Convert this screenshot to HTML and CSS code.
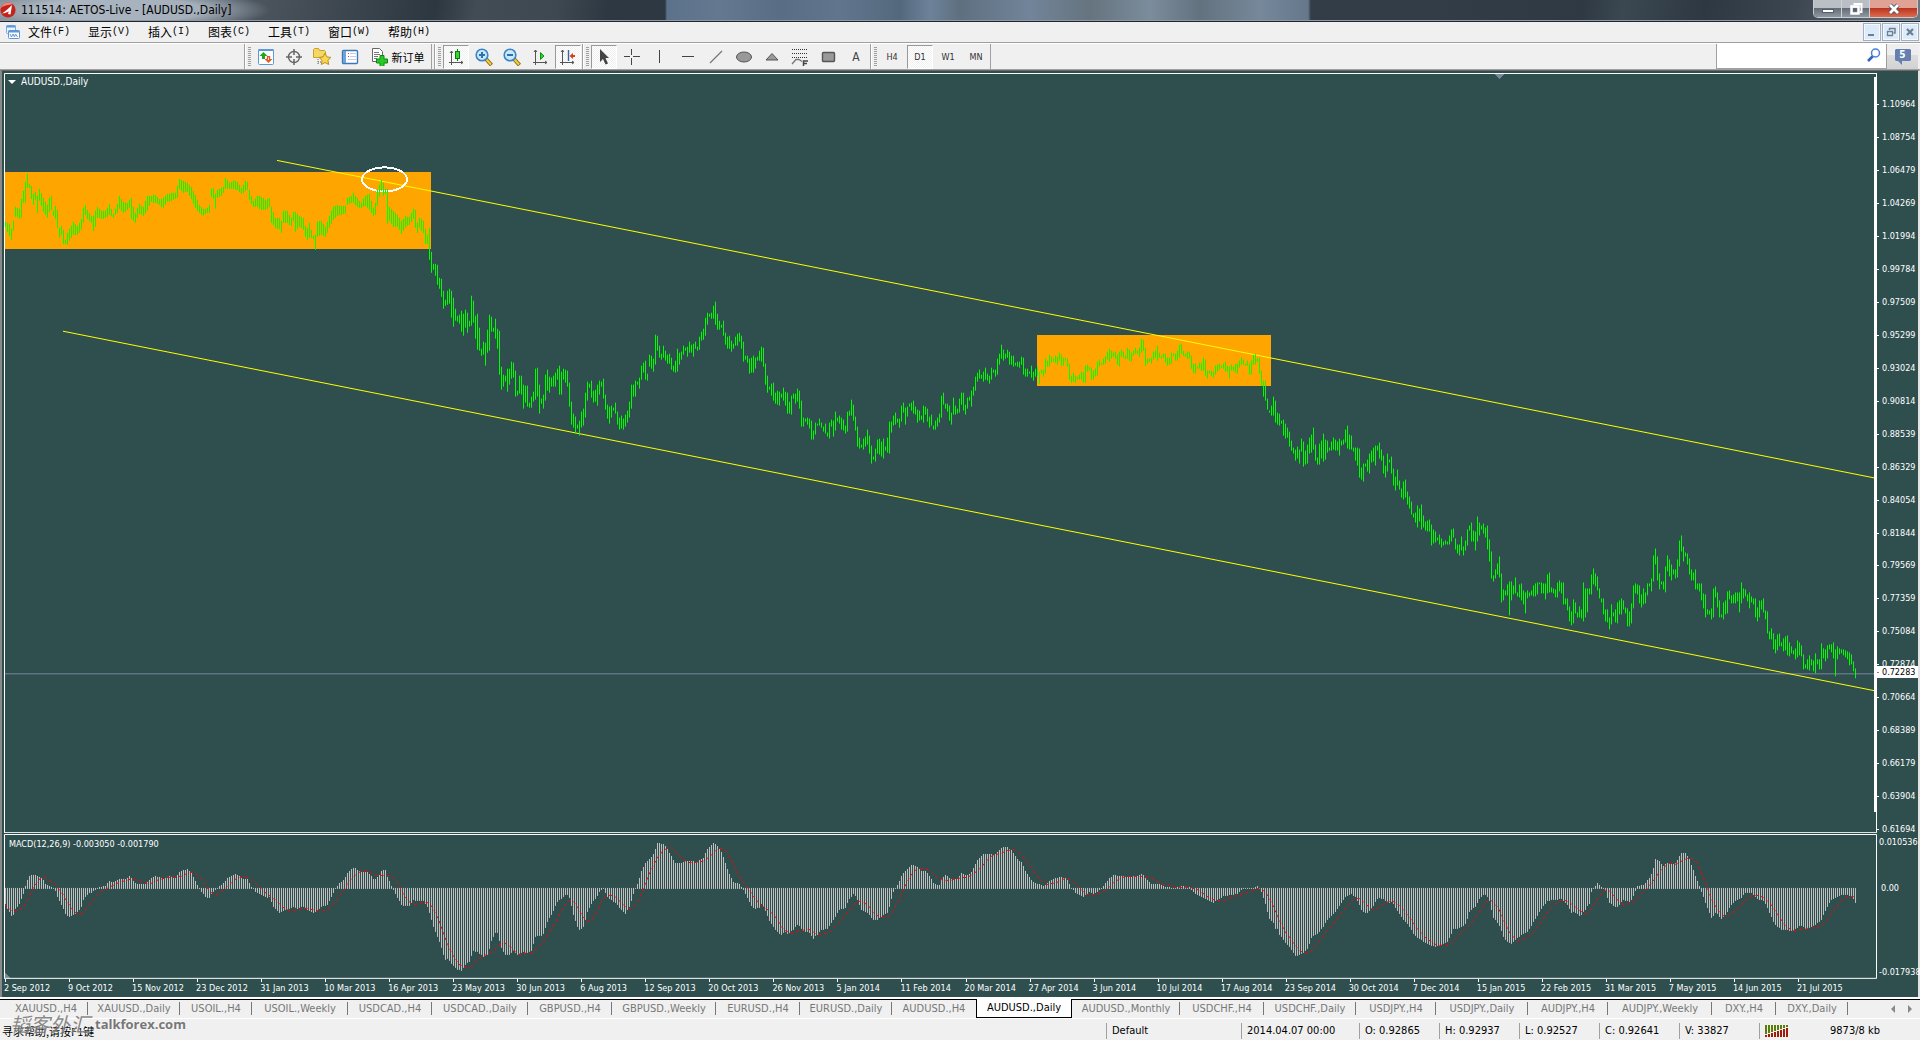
FILE: index.html
```html
<!DOCTYPE html>
<html lang="zh-CN">
<head>
<meta charset="utf-8">
<title>111514: AETOS-Live - [AUDUSD.,Daily]</title>
<link rel="stylesheet" href="styles.css">
</head>
<body>
<header class="titlebar">
  <svg class="app-icon" viewBox="0 0 16 16" width="16" height="16"><circle cx="8" cy="8" r="7.6" fill="#c5221c"/><path d="M1 6A7.6 7.6 0 0 1 13 2C9 3 4 3 1 6z" fill="#e88a80"/><path d="M2 11.500Q6 9 12 3l-1.500 9.500-2.500-.5.8-2.500L5 11z" fill="#fff"/></svg>
  <h1 class="title">111514: AETOS-Live - [AUDUSD.,Daily]</h1>
  <div class="win-controls">
    <button class="win-btn win-min" aria-label="Minimize"><svg viewBox="0 0 14 12" width="14" height="12"><rect x="1.500" y="6.500" width="11" height="3" fill="#fff" stroke="#555f6b"/></svg></button>
    <button class="win-btn win-max" aria-label="Restore"><svg viewBox="0 0 14 12" width="14" height="12"><path d="M4.500 1h8v8h-2" fill="none" stroke="#fff" stroke-width="2"/><rect x="2.500" y="3.500" width="7" height="7" fill="none" stroke="#fff" stroke-width="2.500"/><rect x="4.500" y="5.500" width="3" height="3" fill="#555f6b"/></svg></button>
    <button class="win-btn win-close" aria-label="Close"><svg viewBox="0 0 14 12" width="14" height="12"><path d="M3 2l8 8M11 2l-8 8" stroke="#4b5060" stroke-width="4.500"/><path d="M3 2l8 8M11 2l-8 8" stroke="#fff" stroke-width="2.800"/></svg></button>
  </div>
</header>

<nav class="menubar">
  <svg class="mdi-icon" viewBox="0 0 15 15" width="15" height="15"><rect x="1.500" y=".5" width="9" height="8" rx="1" fill="#eaf3fc" stroke="#7cacdf"/><path d="M1.500 1.500h9" stroke="#5d97d4" stroke-width="2"/><rect x="3.500" y="5.500" width="11" height="8" rx="1" fill="#fff" stroke="#5d97d4"/><path d="M3.500 6.500h11" stroke="#5d97d4" stroke-width="2"/><path d="M5 9l1.500 3L8 9l1.500 3 1-3 2 3" fill="none" stroke="#5d97d4"/></svg>
  <button class="menu">文件<span class="key">(F)</span></button>
  <button class="menu">显示<span class="key">(V)</span></button>
  <button class="menu">插入<span class="key">(I)</span></button>
  <button class="menu">图表<span class="key">(C)</span></button>
  <button class="menu">工具<span class="key">(T)</span></button>
  <button class="menu">窗口<span class="key">(W)</span></button>
  <button class="menu">帮助<span class="key">(H)</span></button>
  <div class="mdi-controls">
    <button class="mdi-btn" aria-label="Minimize chart"><svg viewBox="0 0 12 12" width="12" height="12"><path d="M2 9h6" stroke="#6d7f90" stroke-width="2"/></svg></button>
    <button class="mdi-btn" aria-label="Restore chart"><svg viewBox="0 0 12 12" width="12" height="12"><path d="M4 2.500h6.500M10 2v5H8.500M4.500 2v2" fill="none" stroke="#6d7f90" stroke-width="1.500"/><path d="M2.500 5v4.500h5V5M2 5.500h6" fill="none" stroke="#6d7f90" stroke-width="1.300"/></svg></button>
    <button class="mdi-btn" aria-label="Close chart"><svg viewBox="0 0 12 12" width="12" height="12"><path d="M3 3l6 6M9 3l-6 6" stroke="#6d7f90" stroke-width="2.300"/></svg></button>
  </div>
</nav>

<div class="toolbar">
  <div class="group group-first">
    <span class="grip"></span>
    <button class="tool" aria-label="Market watch"><svg viewBox="0 0 18 18" width="18" height="18"><rect x="1.500" y="1.500" width="15" height="15" rx="1" fill="#fff" stroke="#5b9bd5"/><path d="M1.500 2h15" stroke="#5b9bd5" stroke-width="2"/><path d="M6.500 4l4 4H8v3H5V8H2.500z" fill="#1fa51f"/><path d="M11.500 15l-4-4h2.300V8h3.400v3h2.300z" fill="#e4572a"/><path d="M11.500 9.500v2.500" stroke="#ffe0cc"/></svg></button>
    <button class="tool" aria-label="Data window"><svg viewBox="0 0 18 18" width="18" height="18"><circle cx="9" cy="9" r="5.500" fill="none" stroke="#666" stroke-width="1.400"/><path d="M9 1v6M9 11v6M1 9h6M11 9h6" stroke="#666" stroke-width="1.500"/></svg></button>
    <button class="tool" aria-label="Navigator"><svg viewBox="0 0 18 18" width="18" height="18"><path d="M.5 9.500v-8l1-1h4l1 2h5l1 1v6z" fill="#f5d765" stroke="#c9a227"/><path d="M5 11v6M5 14h4" stroke="#666" stroke-dasharray="1 1"/><path d="M12 5l1.900 3.900 4 .5-3 2.900.8 4.200-3.700-2-3.700 2 .8-4.200-3-2.900 4-.5z" fill="#fbd64f" stroke="#b98f1c"/></svg></button>
    <button class="tool" aria-label="Terminal"><svg viewBox="0 0 18 18" width="18" height="18"><rect x="1.500" y="2.500" width="15" height="13" rx="1" fill="#fff" stroke="#3f78b8" stroke-width="1.400"/><path d="M2 3h3v12H2z" fill="#6fa4da"/><path d="M7 5.500h1M7 8.500h1" stroke="#d33"/><path d="M9 5.500h6M9 8.500h6M7 11.500h8" stroke="#c3cce4"/></svg></button>
    <button class="tool tool-order"><svg viewBox="0 0 18 18" width="18" height="18"><path d="M2.500.5h7l3 3v10h-10z" fill="#fff" stroke="#666"/><path d="M4 4.500h5M4 6.500h6M4 8.500h4M4 10.500h3" stroke="#777"/><path d="M10 7.500h4v3.500h3.500v4H14v3.500h-4V15H6.500v-4H10z" fill="#26c926" stroke="#0e860e"/></svg><span>新订单</span></button>
  </div>
  <div class="group group-charts">
    <span class="grip"></span>
    <button class="tool pressed" aria-label="Candlesticks"><svg viewBox="0 0 18 18" width="18" height="18"><path d="M4.500 3v14M2 14.500h14M3 5l1.500-2L6 5M14 13l2 1.500-2 1.500" fill="none" stroke="#555"/><path d="M10.500 1v12" stroke="#0b7a0b"/><rect x="8.500" y="3.500" width="4" height="7" fill="#35d435" stroke="#0b7a0b"/></svg></button>
    <button class="tool" aria-label="Zoom in"><svg viewBox="0 0 18 18" width="18" height="18"><path d="M11 11l5.500 6" stroke="#8c6a0c" stroke-width="4"/><path d="M11 11l5 5.500" stroke="#f4cf3c" stroke-width="2"/><circle cx="7" cy="7" r="5.800" fill="#c9e8fb" stroke="#3a84c6" stroke-width="1.600"/><path d="M7 4v6M4 7h6" stroke="#2e70ad" stroke-width="2"/></svg></button>
    <button class="tool" aria-label="Zoom out"><svg viewBox="0 0 18 18" width="18" height="18"><path d="M11 11l5.500 6" stroke="#8c6a0c" stroke-width="4"/><path d="M11 11l5 5.500" stroke="#f4cf3c" stroke-width="2"/><circle cx="7" cy="7" r="5.800" fill="#c9e8fb" stroke="#3a84c6" stroke-width="1.600"/><path d="M4 7h6" stroke="#2e70ad" stroke-width="2"/></svg></button>
    <button class="tool" aria-label="Auto scroll"><svg viewBox="0 0 18 18" width="18" height="18"><path d="M4.500 2v15M2 14.500h14M3 4l1.500-2L6 4M14 13l2 1.500-2 1.500" fill="none" stroke="#555"/><path d="M9.500 4.500v7L13 8z" fill="#35d435" stroke="#119111"/></svg></button>
    <button class="tool pressed" aria-label="Chart shift"><svg viewBox="0 0 18 18" width="18" height="18"><path d="M3.500 2v15M1 14.500h14M2 4l1.500-2L5 4M13 13l2 1.500-2 1.500" fill="none" stroke="#555"/><path d="M9.500 2v11" stroke="#2c6aa6" stroke-width="1.400"/><path d="M10.500 8l3.500-3v2h2v2h-2v2z" fill="#d8401a"/></svg></button>
  </div>
  <div class="group">
    <span class="grip"></span>
    <button class="tool pressed" aria-label="Cursor"><svg viewBox="0 0 18 18" width="18" height="18"><path d="M5 1v13l3-3 2.500 5.500 2.500-1L10.500 10H14z" fill="#444"/></svg></button>
    <button class="tool" aria-label="Crosshair"><svg viewBox="0 0 18 18" width="18" height="18"><path d="M8.500 1v6M8.500 10v7M1 8.500h6M10 8.500h7" stroke="#444"/></svg></button>
    <button class="tool" aria-label="Vertical line"><svg viewBox="0 0 18 18" width="18" height="18"><path d="M8.500 2v13" stroke="#444"/></svg></button>
    <button class="tool" aria-label="Horizontal line"><svg viewBox="0 0 18 18" width="18" height="18"><path d="M3 8.500h12" stroke="#444"/></svg></button>
    <button class="tool" aria-label="Trendline"><svg viewBox="0 0 18 18" width="18" height="18"><path d="M3 15L15 3" stroke="#777" stroke-width="1.300"/></svg></button>
    <button class="tool" aria-label="Ellipse"><svg viewBox="0 0 18 18" width="18" height="18"><ellipse cx="9" cy="9" rx="7.500" ry="5" fill="#999" stroke="#555"/></svg></button>
    <button class="tool" aria-label="Triangle"><svg viewBox="0 0 18 18" width="18" height="18"><path d="M9 5.500l6 6.500H3z" fill="#999" stroke="#555"/></svg></button>
    <button class="tool" aria-label="Fibonacci"><svg viewBox="0 0 18 18" width="18" height="18"><path d="M1 1.500h16M1 5.500h16M1 9.500h16" stroke="#333" stroke-dasharray="1 1"/><path d="M1 16l4-4.500h3l3 2" fill="none" stroke="#777" stroke-width="1.300"/><path d="M12.500 18v-5H17M12.500 15.500H16" fill="none" stroke="#444" stroke-width="1.500"/></svg></button>
    <button class="tool" aria-label="Rectangle"><svg viewBox="0 0 18 18" width="18" height="18"><rect x="3.500" y="4.500" width="12" height="9" rx="1" fill="#999" stroke="#555" stroke-width="1.400"/></svg></button>
    <button class="tool letter">A</button>
  </div>
  <div class="group group-last">
    <span class="grip"></span>
    <button class="tool period">H4</button>
    <button class="tool period pressed">D1</button>
    <button class="tool period">W1</button>
    <button class="tool period">MN</button>
  </div>
  <div class="search">
    <input type="text" aria-label="Search">
    <svg viewBox="0 0 14 14" width="14" height="14"><path d="M6 8l-5 5" stroke="#2f62c4" stroke-width="2.600"/><circle cx="8.500" cy="5" r="4" fill="#fff" stroke="#4a7fdc" stroke-width="1.500"/></svg>
  </div>
  <button class="chat" aria-label="Messages"><svg viewBox="0 0 16 16" width="16" height="16"><path d="M1 0h14l1 1v10l-1 1H7v4l-4-4H1l-1-1V1z" fill="#6580b0"/></svg><span>5</span></button>
</div>

<main class="chart">
  <section class="pane price-pane">
    <svg class="plot" viewBox="4 73 1873 761" preserveAspectRatio="none" shape-rendering="crispEdges">
      <rect x="4" y="172" width="427" height="77" fill="#ffa500"/>
      <rect x="1037" y="335" width="234" height="51" fill="#ffa500"/>
      <path d="M5 674.500H1875" stroke="#778899"/>
      <path d="M277 160.500L1875 478.500M63 331.500L1875 691.500" stroke="#ff0" fill="none"/>
      <ellipse cx="384.500" cy="179.500" rx="22.500" ry="12" fill="none" stroke="#fff" stroke-width="2"/>
      <path id="bars" stroke="#0f0" fill="none"/>
      <path d="M4.500 833.500V73.500H1876.500M4 833.500H1877M1876.500 73v760" stroke="#fff" fill="none"/>
      <path d="M1875.500 77v736" stroke="#fff" stroke-width="3"/>
      <path d="M1495 74h9l-4.500 5z" fill="#778899"/>
    </svg>
    <p class="caption symbol"><span class="caret"></span>AUDUSD.,Daily</p>
  </section>
  <ol class="price-axis">
    <li>1.10964</li><li>1.08754</li><li>1.06479</li><li>1.04269</li><li>1.01994</li><li>0.99784</li><li>0.97509</li><li>0.95299</li><li>0.93024</li><li>0.90814</li><li>0.88539</li><li>0.86329</li><li>0.84054</li><li>0.81844</li><li>0.79569</li><li>0.77359</li><li>0.75084</li><li>0.72874</li><li>0.70664</li><li>0.68389</li><li>0.66179</li><li>0.63904</li><li>0.61694</li>
    <li class="current">0.72283</li>
  </ol>
  <section class="pane macd-pane">
    <svg class="plot" viewBox="4 835 1873 145" preserveAspectRatio="none" shape-rendering="crispEdges">
      <path id="histogram" stroke="#c0c0c0" fill="none"/>
      <path id="signal" stroke="#f00" fill="none" stroke-dasharray="3 3"/>
      <path d="M5 974v5h5z" fill="#778899"/>
      <path d="M4.500 979V835.500H1876.500V979.500H4" stroke="#fff" fill="none"/>
    </svg>
    <p class="caption">MACD(12,26,9) -0.003050 -0.001790</p>
  </section>
  <ol class="macd-axis"><li>0.010536</li><li class="zero">0.00</li><li>-0.017938</li></ol>
  <ol class="dates">
    <li>2 Sep 2012</li><li>9 Oct 2012</li><li>15 Nov 2012</li><li>23 Dec 2012</li><li>31 Jan 2013</li><li>10 Mar 2013</li><li>16 Apr 2013</li><li>23 May 2013</li><li>30 Jun 2013</li><li>6 Aug 2013</li><li>12 Sep 2013</li><li>20 Oct 2013</li><li>26 Nov 2013</li><li>5 Jan 2014</li><li>11 Feb 2014</li><li>20 Mar 2014</li><li>27 Apr 2014</li><li>3 Jun 2014</li><li>10 Jul 2014</li><li>17 Aug 2014</li><li>23 Sep 2014</li><li>30 Oct 2014</li><li>7 Dec 2014</li><li>15 Jan 2015</li><li>22 Feb 2015</li><li>31 Mar 2015</li><li>7 May 2015</li><li>14 Jun 2015</li><li>21 Jul 2015</li>
  </ol>
</main>

<nav class="tabs">
  <button class="tab w84">XAUUSD.,H4</button>
  <button class="tab w92">XAUUSD.,Daily</button>
  <button class="tab w72">USOIL.,H4</button>
  <button class="tab w96">USOIL.,Weekly</button>
  <button class="tab w84">USDCAD.,H4</button>
  <button class="tab w96">USDCAD.,Daily</button>
  <button class="tab w84">GBPUSD.,H4</button>
  <button class="tab w104">GBPUSD.,Weekly</button>
  <button class="tab w84">EURUSD.,H4</button>
  <button class="tab w92">EURUSD.,Daily</button>
  <button class="tab w84 before-active">AUDUSD.,H4</button>
  <button class="tab w96 active">AUDUSD.,Daily</button>
  <button class="tab w108">AUDUSD.,Monthly</button>
  <button class="tab w84">USDCHF.,H4</button>
  <button class="tab w92">USDCHF.,Daily</button>
  <button class="tab w80">USDJPY.,H4</button>
  <button class="tab w92">USDJPY.,Daily</button>
  <button class="tab w80">AUDJPY.,H4</button>
  <button class="tab w104">AUDJPY.,Weekly</button>
  <button class="tab w64">DXY.,H4</button>
  <button class="tab w72">DXY.,Daily</button>
  <div class="tab-scroll">
    <button aria-label="Scroll left"><svg viewBox="0 0 4 8" width="4" height="8"><path d="M4 0v8L0 4z" fill="#888"/></svg></button>
    <button aria-label="Scroll right"><svg viewBox="0 0 4 8" width="4" height="8"><path d="M0 0v8l4-4z" fill="#888"/></svg></button>
  </div>
</nav>

<footer class="status">
  <span class="hint">寻求帮助,请按F1键</span>
  <span class="cell profile">Default</span>
  <span class="cell time">2014.04.07 00:00</span>
  <span class="cell">O: 0.92865</span>
  <span class="cell">H: 0.92937</span>
  <span class="cell">L: 0.92527</span>
  <span class="cell">C: 0.92641</span>
  <span class="cell">V: 33827</span>
  <span class="cell traffic">
    <svg viewBox="0 0 23 12" width="23" height="12" shape-rendering="crispEdges"><path d="M1 0v9M4 0v8M7 0v7M10 0v6M13 0v5M16 0v4M19 0v3M22 0v2" stroke="#5a7d0a" stroke-width="2"/><path d="M1 10v2M4 9v3M7 8v4M10 7v5M13 6v6M16 5v7M19 4v8M22 3v9" stroke="#a01c0a" stroke-width="2"/></svg>
    <span>9873/8 kb</span>
  </span>
  <div class="watermark"><span class="brand">韬客外汇</span><span>talkforex.com</span></div>
</footer>
<script src="chart.js"></script>
</body>
</html>
```

FILE: styles.css
```css
* { box-sizing: border-box; }
html, body { height: 100%; }
body {
  margin: 0;
  display: flex;
  flex-direction: column;
  overflow: hidden;
  background: #f0f0f0;
  color: #000;
  font-family: "DejaVu Sans Condensed", "DejaVu Sans", "Noto Sans CJK SC", sans-serif;
  font-size: 11px;
}
button {
  margin: 0;
  padding: 0;
  border: 0;
  background: none;
  color: inherit;
  font: inherit;
}
ol { margin: 0; padding: 0; list-style: none; }
p, h1 { margin: 0; font-weight: normal; }
svg { display: block; flex: none; }

/* Window title */
.titlebar {
  flex: none;
  display: flex;
  align-items: flex-start;
  height: 22px;
  border-bottom: 1px solid #1f262e;
  box-shadow: inset 0 -1px #8f9aa5;
  background:
    radial-gradient(ellipse 150px 22px at 120px 10px, rgba(190, 202, 214, .75) 55%, transparent 100%),
    linear-gradient(90deg, transparent 665px, #5c728a 667px, #647990 720px, #596e85 780px, #61768d 840px, #54687d 900px, #6d8299 930px, #5e7080 960px, #728499 1030px, #66747f 1090px, #7b8c9c 1150px, #63727f 1200px, #76889a 1260px, #65788c 1308px, transparent 1311px),
    linear-gradient(100deg, #7d8790 0, #4b545d 260px, #2d3740 430px, #424c55 470px, #3e4851 550px, #2d3842 600px, #323d47 1400px, #2e3944 1560px, #3b4751 1600px, #2d3843 1680px, #3c4650 1770px, #6d7882 100%);
}
.app-icon { margin: 2px 5px 0 0; }
.title { flex: 1; font: 12px/21px "DejaVu Sans Condensed", "DejaVu Sans", sans-serif; }
.win-controls {
  display: flex;
  height: 18px;
  margin-right: 2px;
  border: 1px solid #c7ccd1;
  border-top: 0;
  border-radius: 0 0 5px 5px;
  overflow: hidden;
}
.win-btn {
  display: flex;
  justify-content: center;
  align-items: center;
  width: 28px;
  height: 17px;
  border-right: 1px solid #d0d4d8;
  background: linear-gradient(#b9bfc5 0 8px, #626b75 8px, #8f979f);
}
.win-close { width: 47px; border: 0; background: linear-gradient(#dfa294 0 8px, #b8341b 8px, #dd6b50); }

/* Menu */
.menubar {
  flex: none;
  display: flex;
  align-items: center;
  gap: 18px;
  height: 21px;
  padding: 0 1px 0 5px;
  border-bottom: 1px solid #a0a0a0;
  font: 12px/18px "Noto Sans CJK SC", sans-serif;
}
.mdi-icon { margin-right: -10px; }
.menu { display: flex; width: 42px; white-space: nowrap; }
.key { font: 10px/18px "Liberation Mono", monospace; }
.mdi-controls { display: flex; gap: 1px; margin-left: auto; }
.mdi-btn {
  display: flex;
  justify-content: center;
  align-items: center;
  width: 18px;
  height: 18px;
  border: 1px solid #9fb0c2;
  background: #dcebfa;
  box-shadow: inset 0 0 0 1px #f4f9fe;
}

/* Toolbar */
.toolbar {
  flex: none;
  display: flex;
  height: 27px;
  border-top: 1px solid #fff;
  border-bottom: 1px solid #a0a0a0;
}
.group {
  display: flex;
  align-items: center;
  padding-left: 3px;
  border-left: 1px solid #a0a0a0;
  box-shadow: inset 1px 0 #fff;
}
.group-first { margin-left: 244px; padding-right: 1px; border-right: 1px solid #a0a0a0; }
.group-charts { margin-left: 2px; }
.group-last { border-right: 1px solid #a0a0a0; }
.grip {
  width: 3px;
  height: 20px;
  margin-right: 1px;
  background: repeating-linear-gradient(#a0a0a0 0 1px, transparent 1px 2px);
}
.tool {
  display: flex;
  justify-content: center;
  align-items: center;
  width: 26px;
  height: 24px;
  margin: 0 1px;
  color: #444;
}
.pressed {
  border: 1px solid #fff;
  border-top-color: #999;
  border-left-color: #999;
  background: repeating-conic-gradient(#fff 0 25%, #f0f0f0 0 50%) 0 0 / 2px 2px;
}
.tool-order {
  width: 64px;
  gap: 4px;
  color: #000;
  font: 11px/20px "Noto Sans CJK SC", sans-serif;
  white-space: nowrap;
}
.letter { font: 12px "DejaVu Sans Condensed", sans-serif; }
.period { font-size: 9px; color: #333; }
.search {
  display: flex;
  align-items: center;
  width: 171px;
  height: 25px;
  margin-left: auto;
  padding-right: 5px;
  border: 1px solid #a0a0a0;
  border-top: 0;
  background: #fff;
}
.search input { flex: 1; min-width: 0; height: 22px; border: 0; outline: 0; background: none; }
.search svg { margin-bottom: 3px; }
.chat {
  display: grid;
  place-items: center;
  width: 31px;
  margin-right: 2px;
  background: linear-gradient(#eee 0 11px, #ddd 11px, #d2d2d2);
}
.chat svg, .chat span { grid-area: 1 / 1; }
.chat span { color: #fff; font-weight: bold; font-size: 10px; padding-bottom: 4px; }

/* Chart window */
.chart {
  flex: 1;
  min-height: 0;
  display: grid;
  grid-template-columns: minmax(0, 1fr) 41px;
  grid-template-rows: minmax(0, 761fr) minmax(0, 145fr) 17px;
  row-gap: 1px;
  padding: 2px 0 0 2px;
  border: solid;
  border-width: 1px 2px 0;
  border-color: #696969 #e3e3e3 #fff #8a8a8a;
  background: #2f4f4f;
  color: #fff;
  font-size: 9px;
}
.pane { display: grid; min-height: 0; }
.plot { grid-area: 1 / 1; width: 100%; height: 100%; }
.caption { grid-area: 1 / 1; align-self: start; padding: 4px 5px; line-height: 12px; }
.symbol { display: flex; align-items: center; padding: 3px 4px; font-size: 10px; }
.caret { margin-right: 5px; border: 4px solid transparent; border-top-color: #fff; border-bottom: 0; }
.price-axis {
  position: relative;
  display: grid;
  grid-template-rows: repeat(22, minmax(0, 33fr)) minmax(0, 20fr);
  padding-top: 15px;
  line-height: 32px;
}
.price-axis li { display: flex; gap: 3px; height: 32px; }
.price-axis li::before { content: ""; width: 2px; height: 1px; margin-top: 16px; background: #fff; }
.price-axis .current {
  position: absolute;
  top: 78%;
  left: 0;
  right: 0;
  height: 12px;
  background: #fff;
  color: #000;
  line-height: 12px;
}
.price-axis .current::before { margin-top: 6px; background: #778899; }
.macd-axis {
  display: grid;
  grid-template-rows: minmax(0, 46fr) minmax(0, 84fr) minmax(0, 15fr);
  padding-left: 2px;
  line-height: 16px;
  white-space: nowrap;
}
.macd-axis .zero { padding-left: 2px; }
.dates {
  grid-column: 1 / 3;
  display: grid;
  grid-template-columns: repeat(29, minmax(0, 64fr)) minmax(0, 57fr);
  margin-top: -1px;
  line-height: 18px;
  white-space: nowrap;
}
.dates li::before { content: ""; display: block; width: 1px; height: 3px; margin: 0 0 -3px 1px; background: #fff; }

/* Chart tabs */
.tabs {
  flex: none;
  display: flex;
  height: 22px;
  padding: 2px 8px 0 4px;
  border-bottom: 1px solid #fff;
  background: linear-gradient(#fff 0 2px, #000 2px 3px, #f0f0f0 3px);
  color: #777;
}
.tab {
  flex: none;
  height: 19px;
  background: linear-gradient(#777, #777) 100% 50% / 1px 13px no-repeat;
  line-height: 18px;
  white-space: nowrap;
}
.before-active { background: none; }
.active { border: 1px solid #000; border-top: 0; background: #fff; color: #000; }
.w64 { width: 64px; }
.w72 { width: 72px; }
.w80 { width: 80px; }
.w84 { width: 84px; }
.w92 { width: 92px; }
.w96 { width: 96px; }
.w104 { width: 104px; }
.w108 { width: 108px; }
.tab-scroll { display: flex; align-items: center; gap: 13px; margin-left: auto; }

/* Status bar */
.status {
  position: relative;
  flex: none;
  display: flex;
  align-items: center;
  height: 21px;
  padding-top: 3px;
}
.hint { flex: 1; padding-left: 2px; font: 11px/16px "Liberation Sans Narrow", "Noto Sans CJK SC", sans-serif; }
.cell { width: 80px; height: 16px; padding-left: 5px; border-left: 1px solid #a0a0a0; line-height: 16px; white-space: nowrap; }
.profile { width: 135px; }
.time { width: 118px; }
.traffic { display: flex; align-items: center; gap: 42px; width: 161px; }
.watermark {
  position: absolute;
  left: 10px;
  top: -9px;
  display: flex;
  align-items: center;
  gap: 5px;
  color: #777;
  font: bold 13px/28px "Open Sans", sans-serif;
  text-shadow: 0 0 2px #fff;
  pointer-events: none;
}
.brand { font: italic 20px/28px "Noto Sans CJK SC", sans-serif; opacity: .85; }
```

FILE: chart.js
```js
// Each block of history carries its own origin and grid density;
// samples are "x high low" in grid units.
const prices = [
  { left: 0, top: 150, sx: 2.45, sy: 3, data: `
13 217 231,22 219 255,30 243 276,35 214 242,40 171 200,48 178 206,53 147 205,58 124 160,63 96 160,67 72 113,72 102 113,77 107 148,82 131 165,87 126 150,92 139 189,97 117 152,106 144 184,116 165 204,121 143 187,126 138 180,131 182 198,136 168 208,141 181 235,146 234 263,151 229 254,156 240 281,161 270 282,166 249 284,171 237 272,180 216 255,190 228 255,200 207 240,205 174 218,210 165 195,215 181 208,224 199 220,229 198 244,234 184 230,239 171 203,249 184 206,259 183 205,268 163 194,278 192 203,288 160 188,292 136 175,302 157 190,312 158 180,317 150 174,322 144 206,331 192 221,341 162 192,351 172 200,361 138 182,371 137 155,380 135 160,390 148 165,400 146 176,409 132 155,419 130 155,430 130 146,435 109 145,440 88 118,449 93 130,459 100 125,469 112 148,479 135 175,488 165 190,498 178 197,508 174 188,513 166 188,518 118 140,523 115 146,528 132 177,533 120 144,543 115 138,548 110 130,553 84 118,562 100 118,572 93 118,582 95 120,592 115 132,602 92 122,607 97 120,612 120 150,620 155 172,631 137 172,641 140 182,650 150 180,660 144 172,665 170 218,675 205 235,684 205 238,689 212 248,694 184 220,704 183 220,714 205 228,719 186 212,724 187 245,734 198 230,743 204 240,748 228 262,753 234 270,758 220 265,768 258 266,773 255 299,778 215 262,788 213 255,798 232 261,807 198 234,816 173 212,826 165 198,836 168 195,846 168 192,850 145 165,861 137 160,866 129 158,875 144 172,885 160 175,895 137 168,905 131 180,915 175 198,920 160 195,925 120 168,930 105 140,935 90 122,940 99 137,945 118 133,949 118 222,954 171 214,964 184 230,974 195 232,984 215 252,993 198 234,1003 202 225,1013 178 208,1018 181 235,1023 218 249,1028 204 234,1037 213 250,1042 237 281,1047 256 281,1052 234 330,1057 306 368,1062 342 360,1067 342 378,1072 345 404,1077 384 416,1081 387 441,1086 423 476,1091 450 468,1096 423 464,1101 417 462,1106 423 503,1111 444 530,1116 477 513,1121 498 515,1125 495 522,1130 483 545,1135 492 557,1140 480 535,1145 489 549,1150 513 530,1155 438 527,1160 453 520,1165 498 567,1170 492 600,1175 534 603,1180 597 618,1184 576 614,1189 579 647,1194 540 609,1199 495 602,1204 501 545,1209 534 545,1214 507 567,1219 537 597,1224 543 675,1229 651 720,1234 675 710,1238 678 696,1243 657 725,1248 657 705,1253 636 686,1258 639 684,1263 663 740,1268 723 738,1273 678 731,1278 678 735,1283 705 776,1288 708 758,1292 708 770,1297 759 773,1302 740 773,1307 727 756,1312 657 750,1317 654 740,1322 705 791,1327 747 762,1332 735 777,1337 675 752,1342 660 722,1346 681 728,1351 684 712,1361 669 710,1366 657 690,1371 648 735,1376 666 735,1381 657 690,1391 663 714,1396 699 770,1400 756 825,1405 792 833,1410 801 852,1415 825 836,1420 813 857,1425 786 834,1430 777 828,1434 729 803,1439 696 752,1444 702 714,1449 693 743,1454 723 758,1459 720 756,1464 705 768,1469 693 735,1473 696 711,1478 687 747,1483 735 780,1488 765 807,1493 771 822,1498 768 803,1503 774 783,1508 759 792,1513 786 825,1518 803 840,1523 798 836,1528 807 840,1537 783 818,1542 756 803,1547 705 777,1552 705 740,1557 693 740,1562 696 705,1567 684 716` },
  { left: 600, top: 290, sx: 2.45, sy: 3, data: `
102 228 270,107 219 249,111 213 270,116 252 273,121 195 231,126 198 238,131 207 246,136 135 225,141 138 183,146 168 204,151 192 209,155 168 204,160 183 213,166 195 221,170 192 221,175 204 240,180 228 246,185 213 248,190 177 246,195 189 225,200 186 210,205 168 195,210 174 183,214 171 201,219 156 189,224 165 189,229 162 201,234 156 177,239 171 183,244 141 180,249 126 153,253 117 150,258 84 138,263 69 105,268 72 81,273 69 87,278 48 87,283 36 105,288 72 120,293 93 120,298 105 114,302 93 138,307 129 165,312 141 177,317 138 177,322 153 186,327 162 177,332 141 168,337 132 168,342 129 156,347 138 177,351 156 216,356 198 210,361 198 219,366 207 252,371 204 249,376 198 249,381 204 237,386 201 213,391 183 213,396 171 216,401 174 231,405 222 285,410 258 309,415 291 300,420 282 318,425 279 333,430 309 342,435 303 345,440 306 348,445 312 324,449 294 333,454 306 348,460 309 372,464 336 372,469 318 375,474 312 327,479 312 342,484 297 336,489 303 357,494 333 411,499 384 411,504 387 396,508 384 405,513 387 417,518 393 450,523 423 450,528 399 435,533 402 408,538 387 408,543 399 414,548 411 426,553 402 432,558 429 441,562 399 447,567 390 411,572 393 441,577 366 423,582 384 396,587 378 402,592 384 420,597 390 423,602 408 432,606 366 426,611 363 378,616 330 378,621 345 393,626 381 423,631 411 471,636 444 477,641 465 474,645 447 480,650 441 471,655 420 465,660 438 492,665 468 522,670 501 510,675 477 516,680 450 492,685 447 495,690 456 501,694 447 507,699 471 483,704 444 489,709 396 492,714 396 429,719 378 408,724 369 405,729 387 399,734 387 414,739 348 396,743 339 369,748 354 405,753 351 381,758 342 351,763 339 363,768 333 372,773 351 375,778 360 399,783 363 393,788 378 390,792 348 399,797 351 375,802 357 396,807 381 414,812 375 408,817 408 420,822 393 420,827 384 411,832 372 399,837 318 384,841 309 345,846 342 357,851 342 366,856 348 393,861 369 405,866 324 375,871 348 375,876 357 372,881 327 369,886 309 345,890 309 363,895 345 375,900 324 357,905 321 333,910 303 351,915 291 318,920 261 303,925 249 276,930 240 267,935 255 267,940 246 276,944 234 270,949 252 273,954 258 282,959 234 270,964 240 249,969 240 261,974 207 255,979 192 225,983 165 207,988 180 213,993 192 207,998 180 204,1003 186 225,1008 198 225,1013 198 231,1018 219 228,1027 216 234,1032 201 225,1037 204 255,1042 237 261,1047 237 261,1052 246 252,1057 228 264,1062 246 273,1067 237 261,1072 231 258,1076 246 282,1081 240 252,1086 240 261,1091 207 252,1096 213 231,1101 195 231,1106 201 219,1111 207 216,1116 198 219,1121 201 225,1126 189 213,1130 195 228,1135 204 228,1140 204 213,1145 207 231,1150 222 270,1155 258 279,1160 249 276,1165 258 279,1170 261 270,1175 255 270,1179 246 270,1184 249 279,1189 228 279,1194 225 246,1199 231 243,1204 234 270,1209 243 270,1214 237 261,1219 216 258,1224 210 231,1229 219 225,1234 207 225,1238 201 222,1243 186 210,1248 177 216,1253 183 207,1258 189 201,1263 186 207,1268 195 225,1273 186 231,1278 180 201,1283 186 204,1288 198 207,1292 174 207,1297 180 213,1302 189 216,1307 183 198,1312 174 192,1317 183 192,1322 174 201,1327 147 189,1332 150 183,1337 174 228,1342 207 222,1347 207 216,1352 204 222,1357 186 210,1362 183 204,1366 168 213,1371 189 204,1376 198 207,1381 192 204,1386 192 219,1391 204 228,1396 204 225,1401 189 222,1406 192 198,1411 192 213,1416 183 213,1421 165 204,1425 162 192,1430 183 198,1435 192 201,1440 186 207,1445 186 207,1450 198 237,1455 222 249,1459 222 252,1464 231 237,1469 219 237,1474 219 243,1479 204 243,1484 210 258,1489 243 267,1494 243 252,1498 243 258,1503 246 264,1508 228 255,1513 225 246,1518 222 240,1523 228 234,1528 222 237,1533 216 246,1538 228 246,1543 231 267,1548 225 243,1553 231 243,1558 222 249,1563 222 252,1567 213 234` },
  { left: 1200, top: 320, sx: 2.178, sy: 3, data: `
91 114 135,95 120 135,99 132 138,104 123 138,108 132 165,112 123 165,117 105 135,121 102 135,126 117 126,130 114 162,134 153 198,139 183 231,143 183 243,147 237 270,152 273 279,156 258 288,160 231 288,165 243 309,169 279 315,173 282 318,178 303 312,182 300 348,186 312 357,191 324 354,195 336 381,199 363 393,204 384 402,208 390 423,212 381 417,217 390 432,221 357 396,226 366 441,230 393 435,234 375 432,239 354 402,243 345 399,247 324 390,252 375 423,256 414 435,260 372 435,265 363 417,269 342 426,273 360 420,278 363 399,282 384 393,286 366 393,291 354 390,295 360 393,299 366 393,304 357 408,308 363 378,313 360 375,317 330 369,321 318 387,326 345 390,330 348 390,334 384 396,339 384 423,343 384 438,348 387 474,352 444 480,356 432 486,361 432 441,365 420 456,369 402 462,374 393 429,378 384 426,382 378 438,387 378 393,391 369 417,395 390 423,400 408 462,404 438 474,408 402 456,413 420 429,417 411 462,421 447 498,426 471 513,430 450 498,434 483 510,439 507 534,443 486 540,448 480 534,452 516 555,456 531 567,461 546 585,465 582 594,469 579 609,474 558 624,478 567 606,482 555 630,487 588 624,491 606 633,495 603 636,500 600 636,504 615 678,508 630 672,513 636 669,517 654 663,521 645 675,526 657 684,530 666 678,535 663 675,539 666 675,543 648 675,548 630 666,552 627 654,556 657 690,561 675 702,565 675 708,569 651 693,574 681 708,578 663 693,582 630 678,587 618 633,591 609 666,596 633 666,600 636 693,604 591 666,608 609 648,613 618 630,617 612 642,622 624 654,626 618 690,630 660 726,635 696 777,639 768 786,643 750 777,648 732 765,652 711 774,657 762 849,661 810 843,665 813 828,670 795 828,674 786 888,678 786 843,683 798 825,687 774 822,691 819 831,696 795 834,700 792 843,705 813 855,709 819 882,713 813 837,718 819 831,722 813 828,726 798 831,731 792 831,735 789 825,739 789 795,744 789 822,748 792 822,752 792 840,757 765 822,761 759 819,765 804 819,770 807 822,774 810 834,779 789 834,783 783 816,787 789 822,792 789 855,796 837 855,800 837 873,805 861 906,809 876 918,814 840 912,818 849 882,822 879 894,827 861 894,831 870 897,835 789 906,840 807 894,844 807 879,848 807 825,853 765 825,857 747 795,861 762 801,866 771 813,870 807 837,874 837 849,879 837 885,883 870 906,888 870 909,892 894 930,896 855 915,901 879 891,905 870 909,909 849 912,914 843 885,918 837 885,922 843 870,927 864 882,931 867 921,936 876 921,940 852 912,944 798 867,949 792 822,953 795 825,957 798 852,962 825 864,966 807 855,970 819 852,975 792 828,979 792 801,983 777 816,988 708 786,992 687 735,997 711 783,1001 762 810,1005 786 795,1010 786 810,1014 741 819,1018 708 756,1023 720 771,1027 735 783,1031 750 765,1036 750 777,1040 720 774,1044 663 741,1049 648 696,1053 681 726,1057 699 711,1062 702 735,1066 717 765,1070 750 783,1075 759 783,1079 750 810,1084 792 810,1088 792 816,1092 792 843,1097 822 867,1101 825 894,1105 870 885,1110 873 885,1114 867 900,1118 807 894,1123 801 834,1127 819 864,1132 843 894,1136 885 894,1140 849 900,1145 843 885,1149 816 882,1154 813 840,1158 828 852,1162 825 852,1167 819 852,1171 819 846,1175 819 879,1179 789 852,1184 807 837,1188 810 831,1193 825 846,1197 819 867,1201 831 849,1206 837 855,1210 837 894,1214 864 906,1219 843 894,1223 843 870,1227 837 879,1232 873 900,1236 876 942,1241 936 960,1245 927 960,1249 942 990,1254 960 1002,1258 945 993,1262 942 981,1267 969 981,1271 957 996,1275 951 993,1280 948 1008,1284 969 1011,1288 981 1002,1293 993 1005,1297 987 1020,1301 963 1014,1306 969 1008,1310 978 1011,1314 1005 1050,1319 1035 1047,1323 1020 1050,1328 1008 1053,1332 1020 1038,1336 1023 1056,1341 1002 1062,1345 1020 1035,1349 1020 1050,1354 972 1050,1358 987 1017,1362 990 1026,1367 978 1017,1371 975 990,1375 975 999,1380 969 1017,1384 990 1071,1388 981 1020,1393 987 1005,1397 990 1002,1401 990 1008,1406 993 1014,1410 996 1020,1414 999 1038,1419 1005 1035,1423 1026 1056,1427 1047 1077` }
];

// MACD samples: "x value" in grid units
const macd = [
  { left: 0, top: 820, sx: 2.45, sy: 3, data: `
13 255,22 279,28 291,33 288,38 270,48 255,58 222,63 201,68 183,73 170,78 168,88 168,97 174,107 183,113 195,121 201,131 210,136 216,141 234,151 258,161 288,171 294,180 288,190 280,200 264,205 243,215 225,225 220,234 213,244 204,258 201,268 186,280 190,290 180,300 178,308 180,317 171,327 186,335 195,355 195,361 190,371 177,381 171,391 175,400 180,415 172,430 174,440 159,450 153,459 150,469 160,479 186,484 198,494 219,503 234,511 237,518 225,528 214,538 201,548 192,558 177,568 170,577 165,587 172,597 180,605 178,616 204,626 218,641 228,655 237,660 234,670 264,685 282,695 274,710 270,720 264,730 270,740 262,755 273,770 282,780 274,790 262,802 258,812 234,822 210,832 192,841 183,850 165,861 150,870 147,880 157,900 159,908 168,918 184,928 168,935 155,944 153,950 174,960 204,970 228,984 260,1003 261,1013 243,1025 247,1038 247,1048 264,1062 324,1077 370,1090 423,1097 420,1107 436,1121 452,1131 456,1140 438,1150 428,1160 396,1170 400,1184 414,1195 408,1204 367,1214 342,1219 342,1228 387,1238 408,1248 407,1258 396,1268 407,1280 400,1290 402,1302 396,1312 352,1330 350,1342 306,1356 276,1366 247,1376 240,1388 225,1396 240,1405 290,1415 324,1422 333,1430 324,1440 276,1450 252,1460 237,1472 213,1478 208,1488 234,1500 246,1510 252,1520 270,1532 285,1542 264,1552 225,1562 195,1567 177` },
  { left: 640, top: 820, sx: 2.45, sy: 3, data: `
3 156,13 132,23 120,33 105,43 72,57 75,66 87,76 110,87 132,100 132,112 126,140 128,155 118,165 90,180 72,190 81,200 99,210 135,220 168,230 192,243 194,250 205,260 228,270 256,280 270,290 266,297 255,305 270,317 306,330 330,345 348,355 340,362 345,375 333,387 315,400 336,415 342,425 360,432 350,445 333,460 330,475 300,490 270,503 268,515 234,522 223,530 235,542 273,552 280,560 285,573 306,585 300,595 290,607 282,616 240,621 220,631 198,642 168,655 150,665 138,675 140,688 155,700 157,710 172,720 195,733 198,738 180,748 168,762 180,778 180,788 162,800 170,812 160,827 123,842 105,870 107,888 84,900 84,912 96,925 120,937 132,945 158,960 186,975 195,990 201,1000 189,1015 178,1030 174,1045 178,1055 204,1067 222,1085 234,1100 220,1112 225,1125 214,1135 201,1150 177,1160 168,1175 171,1200 174,1222 170,1230 162,1240 180,1252 195,1270 194,1290 204,1310 208,1325 201,1345 204,1358 222,1375 234,1390 243,1403 252,1415 243,1430 232,1450 228,1463 225,1475 211,1493 211,1513 201,1522 216,1532 255,1542 300,1553 315,1560 330,1567 348` },
  { left: 1280, top: 820, sx: 2.45, sy: 3, data: `
3 354,13 372,23 385,33 402,40 411,50 408,58 400,68 390,78 352,90 348,105 325,120 297,135 279,150 252,160 234,175 225,187 237,200 275,213 285,225 268,240 237,252 240,265 252,275 250,290 282,305 306,318 324,330 351,345 363,360 375,380 384,395 378,410 370,425 330,440 328,455 315,465 276,480 262,490 237,502 225,512 240,522 295,537 318,548 355,557 370,568 375,578 360,592 348,605 340,620 312,640 270,655 246,672 243,690 240,705 258,715 285,722 280,735 291,745 278,757 255,763 220,772 202,778 192,788 204,797 216,805 250,825 268,840 243,858 250,867 228,875 202,890 198,903 180,912 162,920 120,927 122,938 142,948 132,968 135,978 112,985 102,994 102,1003 120,1015 162,1027 200,1037 234,1048 270,1058 300,1068 280,1080 300,1090 290,1103 264,1115 245,1130 237,1140 222,1155 222,1170 240,1185 245,1195 270,1212 318,1230 333,1258 336,1275 318,1290 332,1310 318,1325 306,1340 265,1350 243,1370 230,1390 228,1402 234,1410 252` }
];

const FIRST_BAR = 5;
const LAST_BAR = 1855;
const STEP = 2;
const ZERO = 889;

function expand(blocks) {
  return blocks.flatMap(b => b.data.trim().split(',').map(row => {
    const [x, ...values] = row.split(' ').map(Number);
    return [b.left + x / b.sx - 0.4, ...values.map(v => b.top + v / b.sy)];
  }));
}

function resample(points) {
  const out = [];
  let k = 0;
  for (let x = FIRST_BAR; x <= LAST_BAR; x += STEP) {
    while (k < points.length - 2 && points[k + 1][0] < x) k++;
    const a = points[k];
    const b = points[k + 1];
    let t = Math.max(0, Math.min(1, (x - a[0]) / (b[0] - a[0])));
    // closely spaced samples belong to single bars and are not blended
    if (b[0] - a[0] < 3) t = Math.round(t);
    out.push([x, ...a.slice(1).map((v, i) => Math.round(v + (b[i + 1] - v) * t))]);
  }
  return out;
}

document.getElementById('bars').setAttribute('d',
  resample(expand(prices)).map(([x, hi, lo]) => `M${x}.5 ${hi}V${lo}`).join(''));

const series = resample(expand(macd));
document.getElementById('histogram').setAttribute('d',
  series.map(([x, y]) => y < ZERO ? `M${x}.5 ${y}V${ZERO + 1}` : `M${x}.5 ${ZERO}V${Math.max(y, ZERO + 1)}`).join(''));

document.getElementById('signal').setAttribute('d', series.map(([x], i) => {
  const span = series.slice(Math.max(0, i - 8), i + 1);
  const mean = span.reduce((sum, p) => sum + p[1], 0) / span.length;
  return `${i ? 'L' : 'M'}${x} ${Math.round(mean)}.5`;
}).join(''));
```
